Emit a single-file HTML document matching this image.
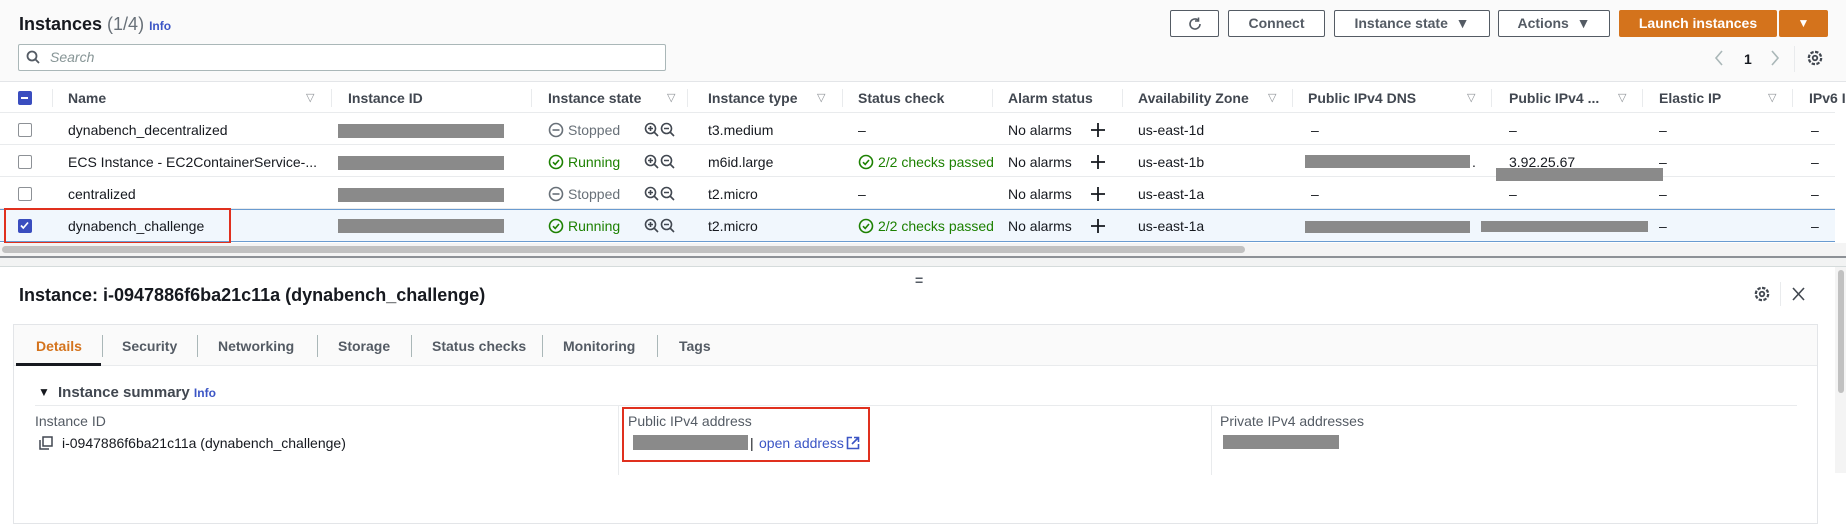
<!DOCTYPE html>
<html><head><meta charset="utf-8"><style>
*{box-sizing:border-box;margin:0;padding:0}
body{width:1846px;height:473px;overflow:hidden;background:#fff;font-family:"Liberation Sans",sans-serif;color:#16191f;position:relative;font-size:14px}
.a{position:absolute;white-space:nowrap}
.top{position:absolute;left:0;top:0;width:1846px;height:82px;background:#fafafa;border-bottom:1px solid #e3e5e8}
.btn{position:absolute;top:10px;height:27px;border:1px solid #545b64;border-radius:2px;background:#fff;font-weight:bold;font-size:14px;color:#545b64;text-align:center;line-height:25px}
.hd{position:absolute;top:82px;left:0;width:1835px;height:31px;border-bottom:1px solid #e9ebed;background:#fff}
.ht{position:absolute;top:90px;font-weight:bold;font-size:14px;color:#414750}
.fv{position:absolute;top:91px;font-size:11px;color:#8d9196}
.dv{position:absolute;top:89px;width:1px;height:18px;background:#e9ebed}
.row{position:absolute;left:0;width:1835px;height:32px;border-bottom:1px solid #e9ebed;background:#fff}
.t{position:absolute;font-size:14px;line-height:16px}
.red{position:absolute;background:#8a8a8a}
.cb{position:absolute;left:18px;width:14px;height:14px;border:1.5px solid #8d9196;border-radius:2px;background:#fff}
.g{color:#1d8102}
.tab{position:absolute;top:338px;font-weight:bold;font-size:14px;color:#545b64}
.tdv{position:absolute;top:335px;width:1px;height:22px;background:#aab7b8}
</style></head><body>
<svg width="0" height="0" style="position:absolute"><defs>
<symbol id="zm" viewBox="0 0 32 16"><circle cx="6.5" cy="6.5" r="5" fill="none" stroke="#414750" stroke-width="1.6"/><path d="M10 10l4 4M4 6.5h5M6.5 4v5" stroke="#414750" stroke-width="1.6"/><circle cx="22.5" cy="6.5" r="5" fill="none" stroke="#414750" stroke-width="1.6"/><path d="M26 10l4 4M20 6.5h5" stroke="#414750" stroke-width="1.6"/></symbol>
<symbol id="pl" viewBox="0 0 14 14"><path d="M7 0v14M0 7h14" stroke="#16191f" stroke-width="1.8"/></symbol>
</defs></svg>
<div class="top"></div>
<div class="a" style="left:19px;top:14px;font-size:18px;font-weight:bold">Instances <span style="font-weight:normal;color:#687078">(1/4)</span> <span style="font-size:12px;color:#3b55c5;font-weight:bold">Info</span></div>
<div class="a" style="left:18px;top:44px;width:648px;height:27px;border:1px solid #aab7b8;border-radius:2px;background:#fff"></div>
<svg class="a" style="left:26px;top:50px" width="14" height="14" viewBox="0 0 14 14"><circle cx="6" cy="6" r="4.5" fill="none" stroke="#545b64" stroke-width="1.8"/><path d="M9.3 9.3L13 13" stroke="#545b64" stroke-width="1.8"/></svg>
<div class="a" style="left:50px;top:49px;font-style:italic;color:#879596;font-size:14px">Search</div>

<div class="btn" style="left:1170px;width:49px"><svg width="16" height="16" viewBox="0 0 16 16" style="margin-top:5px"><path d="M13 8a5 5 0 1 1-2-4" fill="none" stroke="#545b64" stroke-width="1.6"/><path d="M11.5 1.5v3.5h-3.5" fill="none" stroke="#545b64" stroke-width="1.6"/></svg></div>
<div class="btn" style="left:1228px;width:97px">Connect</div>
<div class="btn" style="left:1334px;width:156px">Instance state &nbsp;▼</div>
<div class="btn" style="left:1498px;width:112px">Actions &nbsp;▼</div>
<div class="btn" style="left:1619px;width:158px;background:#d4731c;border-color:#d4731c;color:#fff">Launch instances</div>
<div class="btn" style="left:1779px;width:49px;background:#d4731c;border-color:#d4731c;color:#fff;font-size:12px">▼</div>
<svg class="a" style="left:1714px;top:50px" width="10" height="16" viewBox="0 0 10 16"><path d="M8 1L2 8l6 7" fill="none" stroke="#aab7b8" stroke-width="1.6"/></svg>
<div class="a" style="left:1744px;top:51px;font-weight:bold;font-size:14px">1</div>
<svg class="a" style="left:1770px;top:50px" width="10" height="16" viewBox="0 0 10 16"><path d="M2 1l6 7-6 7" fill="none" stroke="#aab7b8" stroke-width="1.6"/></svg>
<div class="a" style="left:1794px;top:46px;width:1px;height:26px;background:#e9ebed"></div>
<svg class="a" style="left:1806px;top:49px" width="18" height="18" viewBox="0 0 16 16"><circle cx="8" cy="8" r="5.5" fill="none" stroke="#414750" stroke-width="2" stroke-dasharray="3 1.3"/><circle cx="8" cy="8" r="2" fill="none" stroke="#414750" stroke-width="1.6"/></svg>

<div class="hd"></div>
<div class="cb" style="top:91px;background:#3a4dbf;border-color:#3a4dbf"><div style="position:absolute;left:2px;top:4.5px;width:7px;height:2px;background:#fff"></div></div>
<div class="dv" style="left:52px"></div>
<div class="ht" style="left:68px">Name</div><div class="fv" style="left:306px">▽</div><div class="dv" style="left:331px"></div>
<div class="ht" style="left:348px">Instance ID</div><div class="dv" style="left:531px"></div>
<div class="ht" style="left:548px">Instance state</div><div class="fv" style="left:667px">▽</div><div class="dv" style="left:687px"></div>
<div class="ht" style="left:708px">Instance type</div><div class="fv" style="left:817px">▽</div><div class="dv" style="left:842px"></div>
<div class="ht" style="left:858px">Status check</div><div class="dv" style="left:992px"></div>
<div class="ht" style="left:1008px">Alarm status</div><div class="dv" style="left:1122px"></div>
<div class="ht" style="left:1138px">Availability Zone</div><div class="fv" style="left:1268px">▽</div><div class="dv" style="left:1292px"></div>
<div class="ht" style="left:1308px">Public IPv4 DNS</div><div class="fv" style="left:1467px">▽</div><div class="dv" style="left:1491px"></div>
<div class="ht" style="left:1509px">Public IPv4 ...</div><div class="fv" style="left:1618px">▽</div><div class="dv" style="left:1642px"></div>
<div class="ht" style="left:1659px">Elastic IP</div><div class="fv" style="left:1768px">▽</div><div class="dv" style="left:1792px"></div>
<div class="ht" style="left:1809px">IPv6 I</div>

<div class="row" style="top:113px"></div>
<div class="row" style="top:145px"></div>
<div class="row" style="top:177px"></div>
<div class="row" style="top:209px;background:#f1f7fd;border-top:1px solid #6a9bd0;border-bottom:1px solid #6a9bd0;height:33px"></div>

<div class="cb" style="top:123px"></div>
<div class="t" style="left:68px;top:122px">dynabench_decentralized</div>
<div class="red" style="left:338px;top:124px;width:166px;height:14px"></div>
<svg class="a" style="left:548px;top:122px" width="16" height="16" viewBox="0 0 16 16"><circle cx="8" cy="8" r="6.5" fill="none" stroke="#687078" stroke-width="1.6"/><path d="M4.5 8h7" stroke="#687078" stroke-width="1.6"/></svg>
<div class="t" style="left:568px;top:122px;color:#687078">Stopped</div>
<div class="t" style="left:708px;top:122px">t3.medium</div>
<div class="t" style="left:858px;top:122px">–</div>
<div class="t" style="left:1008px;top:122px">No alarms</div>
<div class="t" style="left:1138px;top:122px">us-east-1d</div>
<div class="t" style="left:1311px;top:122px">–</div><div class="t" style="left:1509px;top:122px">–</div><div class="t" style="left:1659px;top:122px">–</div><div class="t" style="left:1811px;top:122px">–</div>

<div class="cb" style="top:155px"></div>
<div class="t" style="left:68px;top:154px">ECS Instance - EC2ContainerService-...</div>
<div class="red" style="left:338px;top:156px;width:166px;height:14px"></div>
<svg class="a" style="left:548px;top:154px" width="16" height="16" viewBox="0 0 16 16"><circle cx="8" cy="8" r="6.5" fill="none" stroke="#1d8102" stroke-width="1.6"/><path d="M5 8.2l2.2 2.2L11 6" fill="none" stroke="#1d8102" stroke-width="1.6"/></svg>
<div class="t g" style="left:568px;top:154px">Running</div>
<div class="t" style="left:708px;top:154px">m6id.large</div>
<svg class="a" style="left:858px;top:154px" width="16" height="16" viewBox="0 0 16 16"><circle cx="8" cy="8" r="6.5" fill="none" stroke="#1d8102" stroke-width="1.6"/><path d="M5 8.2l2.2 2.2L11 6" fill="none" stroke="#1d8102" stroke-width="1.6"/></svg>
<div class="t g" style="left:878px;top:154px">2/2 checks passed</div>
<div class="t" style="left:1008px;top:154px">No alarms</div>
<div class="t" style="left:1138px;top:154px">us-east-1b</div>
<div class="red" style="left:1305px;top:155px;width:165px;height:13px"></div><div class="t" style="left:1472px;top:154px">.</div>
<div class="t" style="left:1509px;top:154px">3.92.25.67</div>
<div class="red" style="left:1496px;top:168px;width:167px;height:13px"></div>
<div class="t" style="left:1659px;top:154px">–</div><div class="t" style="left:1811px;top:154px">–</div>

<div class="cb" style="top:187px"></div>
<div class="t" style="left:68px;top:186px">centralized</div>
<div class="red" style="left:338px;top:188px;width:166px;height:14px"></div>
<svg class="a" style="left:548px;top:186px" width="16" height="16" viewBox="0 0 16 16"><circle cx="8" cy="8" r="6.5" fill="none" stroke="#687078" stroke-width="1.6"/><path d="M4.5 8h7" stroke="#687078" stroke-width="1.6"/></svg>
<div class="t" style="left:568px;top:186px;color:#687078">Stopped</div>
<div class="t" style="left:708px;top:186px">t2.micro</div>
<div class="t" style="left:858px;top:186px">–</div>
<div class="t" style="left:1008px;top:186px">No alarms</div>
<div class="t" style="left:1138px;top:186px">us-east-1a</div>
<div class="t" style="left:1311px;top:186px">–</div><div class="t" style="left:1509px;top:186px">–</div><div class="t" style="left:1659px;top:186px">–</div><div class="t" style="left:1811px;top:186px">–</div>

<div class="cb" style="top:219px;background:#3a4dbf;border-color:#3a4dbf"><svg style="position:absolute;left:0;top:0" width="11" height="11" viewBox="0 0 11 11"><path d="M2 5.5l2.3 2.5L9 2.5" fill="none" stroke="#fff" stroke-width="1.7"/></svg></div>
<div class="t" style="left:68px;top:218px">dynabench_challenge</div>
<div class="red" style="left:338px;top:219px;width:166px;height:14px"></div>
<svg class="a" style="left:548px;top:218px" width="16" height="16" viewBox="0 0 16 16"><circle cx="8" cy="8" r="6.5" fill="none" stroke="#1d8102" stroke-width="1.6"/><path d="M5 8.2l2.2 2.2L11 6" fill="none" stroke="#1d8102" stroke-width="1.6"/></svg>
<div class="t g" style="left:568px;top:218px">Running</div>
<div class="t" style="left:708px;top:218px">t2.micro</div>
<svg class="a" style="left:858px;top:218px" width="16" height="16" viewBox="0 0 16 16"><circle cx="8" cy="8" r="6.5" fill="none" stroke="#1d8102" stroke-width="1.6"/><path d="M5 8.2l2.2 2.2L11 6" fill="none" stroke="#1d8102" stroke-width="1.6"/></svg>
<div class="t g" style="left:878px;top:218px">2/2 checks passed</div>
<div class="t" style="left:1008px;top:218px">No alarms</div>
<div class="t" style="left:1138px;top:218px">us-east-1a</div>
<div class="red" style="left:1305px;top:221px;width:165px;height:12px"></div>
<div class="red" style="left:1481px;top:221px;width:167px;height:11px"></div>
<div class="t" style="left:1659px;top:218px">–</div><div class="t" style="left:1811px;top:218px">–</div>
<div class="a" style="left:4px;top:208px;width:227px;height:36px;border:2.5px solid #e0301e"></div>

<svg class="a" style="left:644px;top:122px" width="32" height="16"><use href="#zm"/></svg>
<svg class="a" style="left:644px;top:154px" width="32" height="16"><use href="#zm"/></svg>
<svg class="a" style="left:644px;top:186px" width="32" height="16"><use href="#zm"/></svg>
<svg class="a" style="left:644px;top:218px" width="32" height="16"><use href="#zm"/></svg>
<svg class="a" style="left:1091px;top:123px" width="14" height="14"><use href="#pl"/></svg>
<svg class="a" style="left:1091px;top:155px" width="14" height="14"><use href="#pl"/></svg>
<svg class="a" style="left:1091px;top:187px" width="14" height="14"><use href="#pl"/></svg>
<svg class="a" style="left:1091px;top:219px" width="14" height="14"><use href="#pl"/></svg>

<div class="a" style="left:0;top:243px;width:1846px;height:13px;background:#f4f4f4"></div>
<div class="a" style="left:2px;top:246px;width:1243px;height:7px;background:#c1c1c1;border-radius:4px"></div>
<div class="a" style="left:0;top:256px;width:1846px;height:2px;background:#8d9196"></div>
<div class="a" style="left:0;top:258px;width:1846px;height:9px;background:#f2f3f3;border-bottom:1px solid #d5dbdb"></div>

<div class="a" style="left:915px;top:272px;font-weight:bold;font-size:14px;color:#545b64">=</div>
<div class="a" style="left:1835px;top:267px;width:11px;height:206px;background:#f4f4f4"></div>
<div class="a" style="left:1838px;top:270px;width:6px;height:123px;background:#c1c1c1;border-radius:3px"></div>
<div class="a" style="left:19px;top:285px;font-size:18px;font-weight:bold">Instance: i-0947886f6ba21c11a (dynabench_challenge)</div>
<svg class="a" style="left:1753px;top:285px" width="18" height="18" viewBox="0 0 16 16"><circle cx="8" cy="8" r="5.5" fill="none" stroke="#414750" stroke-width="2" stroke-dasharray="3 1.3"/><circle cx="8" cy="8" r="2" fill="none" stroke="#414750" stroke-width="1.6"/></svg>
<div class="a" style="left:1780px;top:282px;width:1px;height:24px;background:#e9ebed"></div>
<svg class="a" style="left:1792px;top:287px" width="13" height="14" viewBox="0 0 13 14"><path d="M1 1l11 12M12 1L1 13" stroke="#414750" stroke-width="1.6"/></svg>

<div class="a" style="left:13px;top:324px;width:1805px;height:200px;border:1px solid #e3e5e8;background:#fff"></div>
<div class="a" style="left:14px;top:325px;width:1803px;height:41px;background:#fafafa;border-bottom:1px solid #e9ebed"></div>
<div class="tab" style="left:36px;color:#d4731c">Details</div>
<div class="a" style="left:16px;top:363px;width:85px;height:3px;background:#16191f"></div>
<div class="tdv" style="left:102px"></div><div class="tab" style="left:122px">Security</div>
<div class="tdv" style="left:197px"></div><div class="tab" style="left:218px">Networking</div>
<div class="tdv" style="left:317px"></div><div class="tab" style="left:338px">Storage</div>
<div class="tdv" style="left:411px"></div><div class="tab" style="left:432px">Status checks</div>
<div class="tdv" style="left:542px"></div><div class="tab" style="left:563px">Monitoring</div>
<div class="tdv" style="left:657px"></div><div class="tab" style="left:679px">Tags</div>

<div class="a" style="left:38px;top:385px;font-size:12px">▼</div>
<div class="a" style="left:58px;top:384px;font-size:15px;font-weight:bold;color:#414750">Instance summary <span style="font-size:12px;color:#3b55c5">Info</span></div>
<div class="a" style="left:35px;top:405px;width:1762px;height:1px;background:#e9ebed"></div>
<div class="a" style="left:618px;top:405px;width:1px;height:70px;background:#e9ebed"></div>
<div class="a" style="left:1211px;top:405px;width:1px;height:70px;background:#e9ebed"></div>
<div class="a" style="left:35px;top:413px;font-size:14px;color:#545b64">Instance ID</div>
<svg class="a" style="left:39px;top:436px" width="14" height="14" viewBox="0 0 14 14"><rect x="4" y="1" width="9" height="9" fill="none" stroke="#414750" stroke-width="1.5"/><path d="M1 4v9h9" fill="none" stroke="#414750" stroke-width="1.5"/></svg>
<div class="a" style="left:62px;top:435px;font-size:14px">i-0947886f6ba21c11a (dynabench_challenge)</div>
<div class="a" style="left:628px;top:413px;font-size:14px;color:#545b64">Public IPv4 address</div>
<div class="red" style="left:633px;top:435px;width:115px;height:15px"></div>
<div class="a" style="left:750px;top:435px;font-size:14px">|</div>
<div class="a" style="left:759px;top:435px;font-size:14px;color:#3b55c5">open address</div>
<svg class="a" style="left:846px;top:436px" width="14" height="14" viewBox="0 0 14 14"><path d="M6 1.5H1.5v11h11V8" fill="none" stroke="#3b55c5" stroke-width="1.6"/><path d="M8 1.5h4.5V6M12.5 1.5L6 8" fill="none" stroke="#3b55c5" stroke-width="1.6"/></svg>
<div class="a" style="left:622px;top:407px;width:248px;height:55px;border:2.5px solid #e0301e"></div>
<div class="a" style="left:1220px;top:413px;font-size:14px;color:#545b64">Private IPv4 addresses</div>
<div class="red" style="left:1223px;top:435px;width:116px;height:14px"></div>
</body></html>
